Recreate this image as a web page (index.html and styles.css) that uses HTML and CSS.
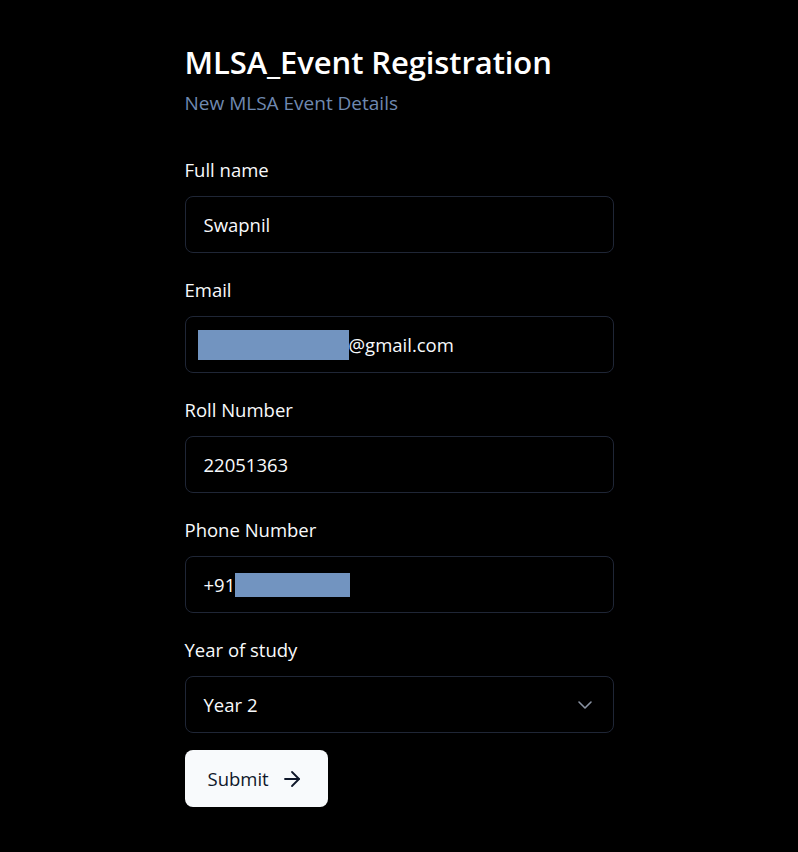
FILE: index.html
```html
<!DOCTYPE html>
<html lang="en">
<head>
<meta charset="utf-8">
<title>MLSA_Event Registration</title>
<link rel="stylesheet" href="styles.css">
</head>
<body>
<main class="page">
  <form class="form">
    <header class="head">
      <h1 class="title">MLSA_Event Registration</h1>
      <p class="subtitle">New MLSA Event Details</p>
    </header>
    <div class="field">
      <label class="label">Full name</label>
      <div class="input">Swapnil</div>
    </div>
    <div class="field">
      <label class="label">Email</label>
      <div class="input input-email"><span class="redact redact-email"></span>@gmail.com</div>
    </div>
    <div class="field">
      <label class="label">Roll Number</label>
      <div class="input">22051363</div>
    </div>
    <div class="field">
      <label class="label">Phone Number</label>
      <div class="input">+91<span class="redact redact-phone"></span></div>
    </div>
    <div class="field">
      <label class="label">Year of study</label>
      <div class="input select">
        <span>Year 2</span>
        <svg class="chev" width="24" height="24" viewBox="0 0 24 24" fill="none" stroke="currentColor" stroke-width="1.6" stroke-linecap="round" stroke-linejoin="round"><path d="M6 9l6 6 6-6"/></svg>
      </div>
    </div>
    <button type="button" class="submit">Submit
      <svg width="24" height="24" viewBox="0 0 24 24" fill="none" stroke="currentColor" stroke-width="1.8" stroke-linecap="round" stroke-linejoin="round"><path d="M5 12h14"/><path d="M12 5l7 7-7 7"/></svg>
    </button>
  </form>
</main>
</body>
</html>
```
FILE: styles.css
```css
html, body {
  margin: 0;
  padding: 0;
  background: #000;
}
body {
  font-family: "Open Sans", "Noto Sans", sans-serif;
  color: #f8fafc;
}
.page {
  display: flex;
  justify-content: center;
  padding-top: 40px;
}
.form {
  width: 429px;
  display: flex;
  flex-direction: column;
}
.head {
  margin-bottom: 39px;
}
.title {
  margin: 0;
  font-size: 31px;
  line-height: 44px;
  font-weight: 600;
  letter-spacing: -0.1px;
  color: #fff;
}
.subtitle {
  margin: 5px 0 0;
  font-size: 19px;
  line-height: 28px;
  color: #6f89b0;
}
.field {
  display: flex;
  flex-direction: column;
  gap: 12px;
  margin-bottom: 23px;
}
.field:last-of-type {
  margin-bottom: 17px;
}
.label {
  font-size: 18.5px;
  line-height: 28px;
  color: #f8fafc;
}
.input {
  box-sizing: border-box;
  height: 57px;
  border: 1px solid #1f2636;
  border-radius: 8px;
  padding: 0 18px;
  display: flex;
  align-items: center;
  font-size: 18.5px;
  color: #f8fafc;
}
.input-email {
  padding-left: 12px;
}
.redact {
  display: inline-block;
  background: #7294c0;
}
.redact-email {
  width: 151px;
  height: 30px;
}
.redact-phone {
  width: 115px;
  height: 24px;
}
.select {
  justify-content: space-between;
  padding-right: 16px;
}
.chev {
  color: #8a93a3;
}
.submit {
  align-self: flex-start;
  box-sizing: border-box;
  width: 143px;
  height: 57px;
  border: none;
  border-radius: 8px;
  background: #f8fafc;
  color: #0f172a;
  font-family: inherit;
  font-size: 18.5px;
  display: flex;
  align-items: center;
  gap: 11px;
  padding: 0 23px;
}
```
